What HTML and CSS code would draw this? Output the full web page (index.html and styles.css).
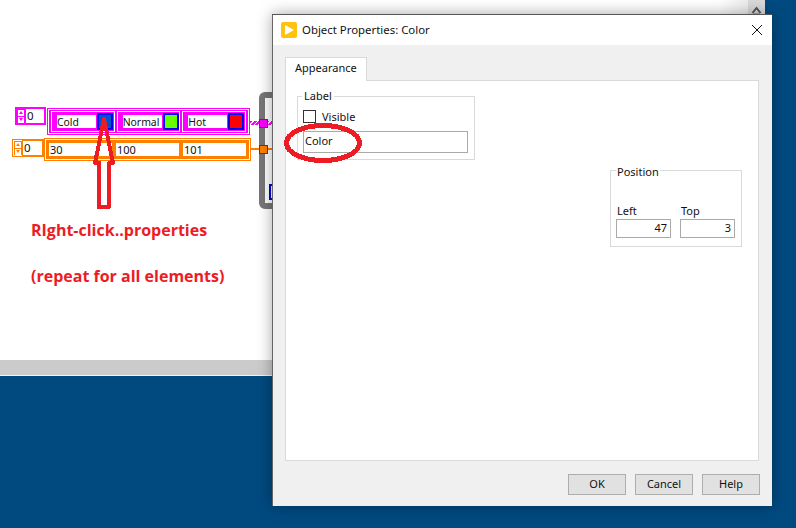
FILE: index.html
```html
<!DOCTYPE html>
<html lang="en">
<head>
<meta charset="utf-8">
<title>Object Properties: Color</title>
<link rel="stylesheet" href="styles.css">
</head>
<body>
<div class="desktop">
  <section class="backwin">
    <div class="scrollfade"></div>
    <div class="scrollup"><svg width="17" height="14" viewBox="0 0 17 14"><path d="M4.5 13 L8.5 8 L12.5 13" fill="none" stroke="#555" stroke-width="2"/><path d="M5 14 H12" stroke="#777"/></svg></div>
    <div class="statusbar"></div>

    <div class="node idx idx-pink"><div class="spin"><i class="up"></i><i class="down"></i></div><div class="idxval">0</div></div>
    <div class="node arr arr-pink">
      <div class="arr-in">
        <div class="cell"><span class="name">Cold</span><span class="swatch swatch-blue"></span></div>
        <div class="cell"><span class="name">Normal</span><span class="swatch swatch-green"></span></div>
        <div class="cell"><span class="name">Hot</span><span class="swatch swatch-red"></span></div>
      </div>
    </div>

    <div class="node idx idx-orange"><div class="spin"><i class="up"></i><i class="down"></i></div><div class="idxval">0</div></div>
    <div class="node arr arr-orange">
      <div class="arr-in">
        <div class="num">30</div><div class="num">100</div><div class="num">101</div>
      </div>
    </div>

    <div class="node loop"></div>
    <div class="node wire-pink"></div>
    <div class="node wire-orange"></div>
    <div class="node term term-pink"></div>
    <div class="node term term-orange"></div>
    <div class="node bluebox"></div>

    <svg class="node arrow" width="30" height="100" viewBox="0 0 30 100" shape-rendering="crispEdges"><path d="M14 7 L5 51 H9 V95 H19 V51 H23 Z" fill="none" stroke="#ed1c24" stroke-width="4" stroke-linejoin="round"/></svg>
    <p class="node note note-1">RIght-click..properties</p>
    <p class="node note note-2">(repeat for all elements)</p>
  </section>

  <section class="dialog">
    <header class="titlebar">
      <svg class="appicon" width="16" height="16" viewBox="0 0 16 16"><rect width="16" height="16" rx="2" fill="#ffc20e"/><path d="M4 3 L13 8 L4 13 Z" fill="#fff"/></svg>
      <span class="title">Object Properties: Color</span>
      <svg class="close" width="12" height="12" viewBox="0 0 12 12"><path d="M1 1 L11 11 M11 1 L1 11" stroke="#111" stroke-width="1" fill="none"/></svg>
    </header>
    <div class="dlgbody">
      <div class="tab">Appearance</div>
      <div class="panel">
        <fieldset class="group group-label">
          <legend>Label</legend>
          <div class="checkrow"><span class="check"></span><span>Visible</span></div>
          <div class="field field-wide">Color</div>
        </fieldset>
        <fieldset class="group group-pos">
          <legend>Position</legend>
          <div class="posrow">
            <div class="poscol"><span class="poslabel">Left</span><div class="field field-num">47</div></div>
            <div class="poscol"><span class="poslabel">Top</span><div class="field field-num">3</div></div>
          </div>
        </fieldset>
      </div>
      <div class="buttons">
        <button class="btn">OK</button>
        <button class="btn">Cancel</button>
        <button class="btn">Help</button>
      </div>
    </div>
  </section>

  <svg class="ellipse" width="84" height="46" viewBox="0 0 84 46" shape-rendering="crispEdges"><ellipse cx="42" cy="23" rx="36.5" ry="17.5" fill="none" stroke="#ed1c24" stroke-width="5"/></svg>
</div>
</body>
</html>
```
FILE: styles.css
```css
* { box-sizing: border-box; }
html, body { margin: 0; padding: 0; }
body {
  width: 796px;
  height: 528px;
  overflow: hidden;
  font-family: "Noto Sans", sans-serif;
  font-size: 11px;
  color: #111;
}
.desktop {
  position: relative;
  width: 796px;
  height: 528px;
  background: #004a80;
  overflow: hidden;
}

/* back window (block diagram) */
.backwin {
  position: absolute;
  left: 0;
  top: 0;
  width: 765px;
  height: 376px;
  background: #fff;
  border-bottom: 1px solid #f2f2f2;
}
.scrollfade {
  position: absolute;
  right: 17px;
  top: 0;
  width: 30px;
  height: 14px;
  background: linear-gradient(90deg, #fff, #ececec);
}
.scrollup {
  position: absolute;
  right: 0;
  top: 0;
  width: 17px;
  height: 14px;
  background: #d9d9d9;
}
.statusbar {
  position: absolute;
  left: 0;
  right: 0;
  top: 360px;
  height: 15px;
  background: #cbcbcb;
}
.node { position: absolute; margin: 0; }

.idx {
  display: flex;
  border: 1px solid;
  padding: 1px;
  gap: 1px;
}
.idx-pink { left: 15px; top: 107px; width: 31px; height: 18px; border-color: #ff00ff; background: #ff00ff; --ink: #ff00ff; }
.idx-orange { left: 12px; top: 139px; width: 32px; height: 18px; border-color: #ff8000; background: #fff; --ink: #ff8000; }
.idx-orange .idxval { outline: 1px solid #ff8000; }
.idx-orange .spin { background: #ff8000; }
.spin {
  width: 8px;
  display: flex;
  flex-direction: column;
  gap: 1px;
  justify-content: center;
  align-items: center;
}
.spin i {
  width: 6px;
  height: 6px;
  background: #fff;
  display: flex;
  align-items: center;
  justify-content: center;
}
.spin i::after {
  content: "";
  border-left: 2px solid transparent;
  border-right: 2px solid transparent;
}
.spin .up::after { border-bottom: 3px solid var(--ink); }
.spin .down::after { border-top: 3px solid var(--ink); }
.idxval {
  flex: 1;
  background: #fff;
  font-size: 11.5px;
  line-height: 13px;
  padding-left: 1px;
  color: #111;
}

.arr { border: 1px solid; padding: 1px; background: #fff; }
.arr-pink { left: 47px; top: 108px; width: 203px; height: 27px; border-color: #ff00ff; }
.arr-orange { left: 44px; top: 138px; width: 207px; height: 23px; border-color: #ff8000; }
.arr-in { display: flex; height: 100%; }
.arr-pink .arr-in { background: #ff00ff; padding: 1px 2px; gap: 2px; }
.arr-orange .arr-in { background: #ff8000; padding: 3px; gap: 4px; }

.cell {
  width: 64px;
  height: 21px;
  border: 1px solid #fff;
  background: #ff00ff;
  display: flex;
  align-items: center;
  padding-left: 5px;
  gap: 1px;
}
.name {
  width: 39px;
  height: 13px;
  background: #fff;
  line-height: 15px;
  padding-left: 0;
  font-size: 10.4px;
}
.swatch {
  width: 16px;
  height: 17px;
  border: 2px solid #0000f0;
  display: block;
}
.swatch-blue { background: #0050d0; }
.swatch-green { background: #66ff00; }
.swatch-red { background: #ff0000; }

.num {
  flex: 1;
  background: #fff;
  line-height: 14px;
  padding-left: 1px;
  font-size: 11px;
}

.loop {
  left: 259px;
  top: 92px;
  width: 30px;
  height: 117px;
  border: 6px solid #777;
  border-radius: 6px;
}
.wire-pink {
  left: 250px;
  top: 121px;
  width: 22px;
  height: 4px;
  background: repeating-linear-gradient(135deg, #ff00ff 0 2px, #fff 2px 3px);
}
.wire-orange { left: 251px; top: 148px; width: 21px; height: 2px; background: #ff8000; }
.term { left: 259px; width: 9px; height: 9px; border: 1px solid #444; }
.term-pink { top: 119px; background: #ff00ff; }
.term-orange { top: 145px; background: #ff8000; }
.bluebox { left: 269px; top: 184px; width: 8px; height: 16px; border: 2px solid #0000e0; background: #fff; }

.arrow { left: 90px; top: 112px; }
.note {
  left: 31px;
  color: #ed1c24;
  font-family: "Open Sans", sans-serif;
  font-weight: 700;
  font-size: 16px;
  line-height: 20px;
  white-space: nowrap;
}
.note-1 { top: 220px; }
.note-2 { top: 266px; }

/* dialog */
.dialog {
  position: absolute;
  left: 272px;
  top: 14px;
  width: 500px;
  height: 492px;
  background: #f0f0f0;
  border-top: 1px solid #555;
  border-left: 1px solid #666;
  box-shadow: 0 0 14px rgba(0, 0, 0, .35);
  display: flex;
  flex-direction: column;
}
.titlebar {
  height: 30px;
  background: #fff;
  display: flex;
  align-items: center;
  padding-left: 8px;
  flex: none;
}
.appicon { margin-right: 5px; }
.title { font-size: 11.4px; color: #111; margin-top: -2px; }
.close { margin-left: auto; margin-right: 9px; }

.dlgbody {
  flex: 1;
  padding: 12px 13px 0 12px;
  display: flex;
  flex-direction: column;
}
.tab {
  width: 82px;
  height: 24px;
  background: #fff;
  border: 1px solid #d9d9d9;
  border-bottom: 0;
  padding-left: 9px;
  line-height: 20px;
  margin-bottom: -1px;
  position: relative;
  z-index: 1;
}
.panel {
  width: 474px;
  height: 381px;
  background: #fff;
  border: 1px solid #d9d9d9;
  padding: 7px 16px 0 11px;
  display: flex;
  justify-content: space-between;
  align-items: flex-start;
}
.group {
  margin: 0;
  border: 1px solid #d9d9d9;
  padding: 0 5px;
  min-width: 0;
}
.group legend {
  font-size: 11px;
  line-height: 16px;
  padding: 0 2px;
  margin-left: -1px;
}
.group-label { width: 178px; height: 72px; }
.group-pos { width: 132px; height: 87px; margin-top: 72px; }
.group-pos legend { padding: 4px 1px 0; margin-left: 0; }
.checkrow {
  display: flex;
  align-items: center;
  gap: 6px;
  height: 13px;
  margin-top: 6px;
}
.check { width: 13px; height: 13px; border: 1px solid #333; background: #fff; display: block; }
.field { border: 1px solid #aaa; background: #fff; padding: 0 3px; }
.field-wide { width: 165px; height: 22px; line-height: 18px; margin-top: 8px; padding-left: 1px; }
.posrow { display: flex; gap: 9px; margin-top: 24px; }
.poscol { display: flex; flex-direction: column; width: 55px; }
.poslabel { line-height: 14px; padding-left: 1px; margin-bottom: 1px; }
.field-num { height: 19px; line-height: 15px; text-align: right; }

.buttons {
  display: flex;
  justify-content: flex-end;
  gap: 9px;
  margin-top: 13px;
  margin-right: -1px;
}
.btn {
  width: 58px;
  height: 21px;
  padding: 0 0 2px;
  border: 1px solid #adadad;
  border-radius: 0;
  background: #e1e1e1;
  font-family: inherit;
  font-size: 11px;
  color: #111;
}

.ellipse { position: absolute; left: 281px; top: 120px; }
```
